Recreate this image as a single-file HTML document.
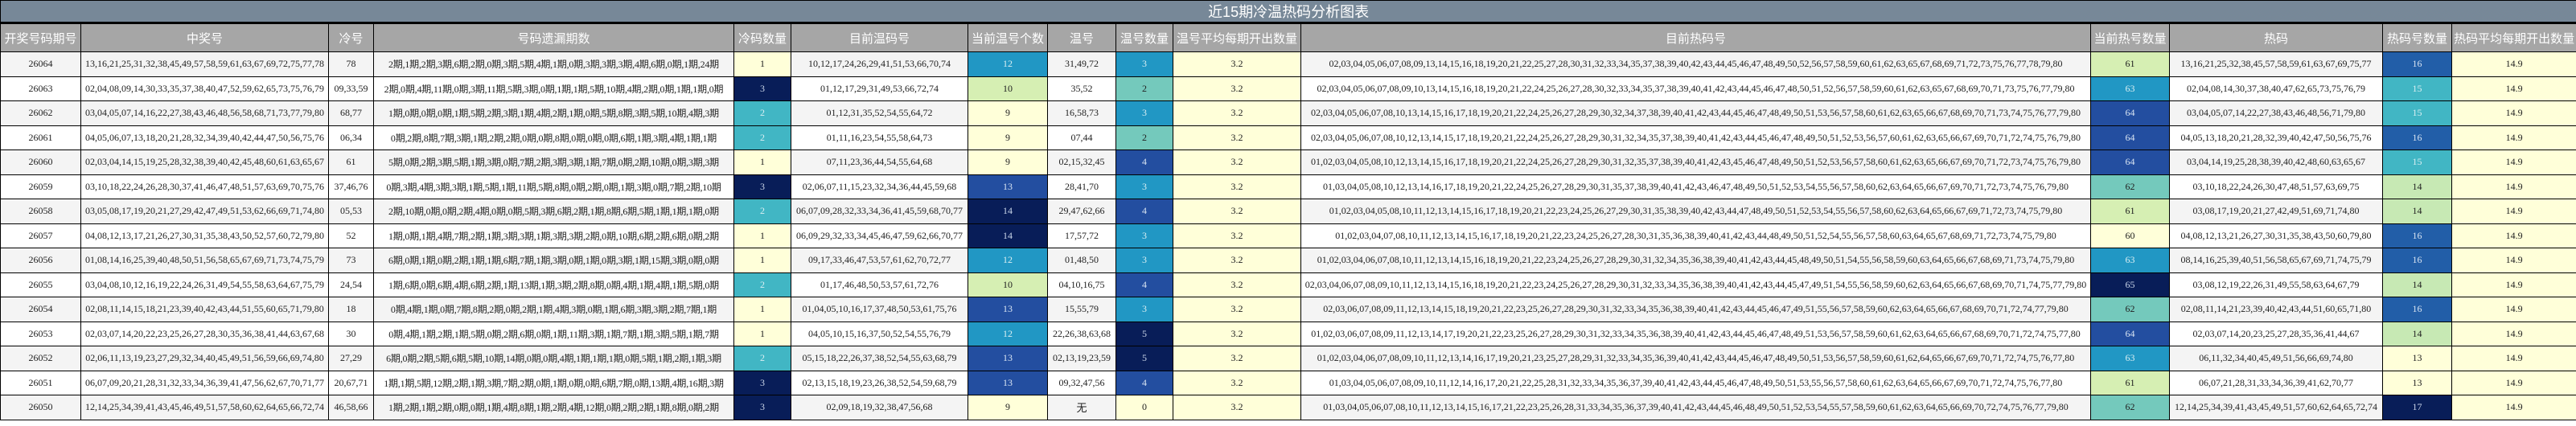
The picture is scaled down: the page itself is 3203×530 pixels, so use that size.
<!DOCTYPE html>
<html><head><meta charset="utf-8">
<style>
html,body{margin:0;padding:0;background:#fff;}
body{width:3203px;height:530px;overflow:hidden;}
table{border-collapse:collapse;table-layout:fixed;width:3203px;}
td{border:1.5px solid #000;text-align:center;white-space:nowrap;overflow:hidden;padding:0;
 font-family:"Liberation Serif","Noto Serif CJK SC",serif;font-size:12px;color:#222;}
tr.t td{height:26px;background:#778898;color:#fff;font-family:"Liberation Sans","Noto Sans CJK SC",sans-serif;font-size:18px;border-bottom:3px solid #000;}
tr.h td{height:34px;background:#a6a6a6;color:#fff;font-family:"Liberation Sans","Noto Sans CJK SC",sans-serif;font-size:15px;}
tr.d td{height:29.5px;}
tr.o td{background:#f4f4f4;}
tr.e td{background:#fff;}
tr.d td.Y{background:#ffffd9;}
tr.d td.G{background:#d6efb3;}
tr.d td.G2{background:#c7e9b4;}
tr.d td.T{background:#74c9bc;}
tr.d td.T2{background:#41b6c4;color:#d8eef2;}
tr.d td.B1{background:#2197c4;color:#d8eef2;}
tr.d td.B2{background:#225ea8;color:#d8e4f2;}
tr.d td.B3{background:#234ea0;color:#d8e4f2;}
tr.d td.D{background:#081d58;color:#c8d4e8;}
td.c4{font-family:"Liberation Serif","Noto Sans CJK SC",serif;letter-spacing:-0.2px;}
</style></head><body>
<table>
<colgroup>
<col style="width:100px"><col style="width:308px"><col style="width:56px"><col style="width:448px"><col style="width:71px"><col style="width:220px"><col style="width:99px"><col style="width:85px"><col style="width:71px"><col style="width:159px"><col style="width:982px"><col style="width:98px"><col style="width:265px"><col style="width:86px"><col style="width:155px">
</colgroup>
<tr class="t"><td colspan="15">近15期冷温热码分析图表</td></tr>
<tr class="h"><td>开奖号码期号</td><td>中奖号</td><td>冷号</td><td>号码遗漏期数</td><td>冷码数量</td><td>目前温码号</td><td>当前温号个数</td><td>温号</td><td>温号数量</td><td>温号平均每期开出数量</td><td>目前热码号</td><td>当前热号数量</td><td>热码</td><td>热码号数量</td><td>热码平均每期开出数量</td></tr>

<tr class="d o"><td>26064</td><td>13,16,21,25,31,32,38,45,49,57,58,59,61,63,67,69,72,75,77,78</td><td>78</td><td class="c4">2期,1期,2期,3期,6期,2期,0期,3期,5期,4期,1期,0期,3期,3期,3期,4期,6期,0期,1期,24期</td><td class="Y">1</td><td>10,12,17,24,26,29,41,51,53,66,70,74</td><td class="B1">12</td><td>31,49,72</td><td class="B1">3</td><td class="Y">3.2</td><td>02,03,04,05,06,07,08,09,13,14,15,16,18,19,20,21,22,25,27,28,30,31,32,33,34,35,37,38,39,40,42,43,44,45,46,47,48,49,50,52,56,57,58,59,60,61,62,63,65,67,68,69,71,72,73,75,76,77,78,79,80</td><td class="G">61</td><td>13,16,21,25,32,38,45,57,58,59,61,63,67,69,75,77</td><td class="B2">16</td><td class="Y">14.9</td></tr>

<tr class="d e"><td>26063</td><td>02,04,08,09,14,30,33,35,37,38,40,47,52,59,62,65,73,75,76,79</td><td>09,33,59</td><td class="c4">2期,0期,4期,11期,0期,3期,11期,5期,3期,0期,1期,1期,5期,10期,4期,2期,0期,1期,1期,0期</td><td class="D">3</td><td>01,12,17,29,31,49,53,66,72,74</td><td class="G">10</td><td>35,52</td><td class="T">2</td><td class="Y">3.2</td><td>02,03,04,05,06,07,08,09,10,13,14,15,16,18,19,20,21,22,24,25,26,27,28,30,32,33,34,35,37,38,39,40,41,42,43,44,45,46,47,48,50,51,52,56,57,58,59,60,61,62,63,65,67,68,69,70,71,73,75,76,77,79,80</td><td class="B1">63</td><td>02,04,08,14,30,37,38,40,47,62,65,73,75,76,79</td><td class="T2">15</td><td class="Y">14.9</td></tr>

<tr class="d o"><td>26062</td><td>03,04,05,07,14,16,22,27,38,43,46,48,56,58,68,71,73,77,79,80</td><td>68,77</td><td class="c4">1期,0期,0期,0期,1期,5期,2期,3期,1期,4期,2期,1期,0期,5期,8期,3期,5期,10期,4期,3期</td><td class="T2">2</td><td>01,12,31,35,52,54,55,64,72</td><td class="Y">9</td><td>16,58,73</td><td class="B1">3</td><td class="Y">3.2</td><td>02,03,04,05,06,07,08,10,13,14,15,16,17,18,19,20,21,22,24,25,26,27,28,29,30,32,34,37,38,39,40,41,42,43,44,45,46,47,48,49,50,51,53,56,57,58,60,61,62,63,65,66,67,68,69,70,71,73,74,75,76,77,79,80</td><td class="B3">64</td><td>03,04,05,07,14,22,27,38,43,46,48,56,71,79,80</td><td class="T2">15</td><td class="Y">14.9</td></tr>

<tr class="d e"><td>26061</td><td>04,05,06,07,13,18,20,21,28,32,34,39,40,42,44,47,50,56,75,76</td><td>06,34</td><td class="c4">0期,2期,8期,7期,3期,1期,2期,2期,0期,0期,8期,0期,0期,0期,6期,1期,3期,4期,1期,1期</td><td class="T2">2</td><td>01,11,16,23,54,55,58,64,73</td><td class="Y">9</td><td>07,44</td><td class="T">2</td><td class="Y">3.2</td><td>02,03,04,05,06,07,08,10,12,13,14,15,17,18,19,20,21,22,24,25,26,27,28,29,30,31,32,34,35,37,38,39,40,41,42,43,44,45,46,47,48,49,50,51,52,53,56,57,60,61,62,63,65,66,67,69,70,71,72,74,75,76,79,80</td><td class="B3">64</td><td>04,05,13,18,20,21,28,32,39,40,42,47,50,56,75,76</td><td class="B2">16</td><td class="Y">14.9</td></tr>

<tr class="d o"><td>26060</td><td>02,03,04,14,15,19,25,28,32,38,39,40,42,45,48,60,61,63,65,67</td><td>61</td><td class="c4">5期,0期,2期,3期,5期,1期,3期,0期,7期,2期,3期,3期,1期,7期,0期,2期,10期,0期,3期,3期</td><td class="Y">1</td><td>07,11,23,36,44,54,55,64,68</td><td class="Y">9</td><td>02,15,32,45</td><td class="B3">4</td><td class="Y">3.2</td><td>01,02,03,04,05,08,10,12,13,14,15,16,17,18,19,20,21,22,24,25,26,27,28,29,30,31,32,35,37,38,39,40,41,42,43,45,46,47,48,49,50,51,52,53,56,57,58,60,61,62,63,65,66,67,69,70,71,72,73,74,75,76,79,80</td><td class="B3">64</td><td>03,04,14,19,25,28,38,39,40,42,48,60,63,65,67</td><td class="T2">15</td><td class="Y">14.9</td></tr>

<tr class="d e"><td>26059</td><td>03,10,18,22,24,26,28,30,37,41,46,47,48,51,57,63,69,70,75,76</td><td>37,46,76</td><td class="c4">0期,3期,4期,3期,3期,1期,5期,1期,11期,5期,8期,0期,2期,0期,1期,3期,0期,7期,2期,10期</td><td class="D">3</td><td>02,06,07,11,15,23,32,34,36,44,45,59,68</td><td class="B3">13</td><td>28,41,70</td><td class="B1">3</td><td class="Y">3.2</td><td>01,03,04,05,08,10,12,13,14,16,17,18,19,20,21,22,24,25,26,27,28,29,30,31,35,37,38,39,40,41,42,43,46,47,48,49,50,51,52,53,54,55,56,57,58,60,62,63,64,65,66,67,69,70,71,72,73,74,75,76,79,80</td><td class="T">62</td><td>03,10,18,22,24,26,30,47,48,51,57,63,69,75</td><td class="G2">14</td><td class="Y">14.9</td></tr>

<tr class="d o"><td>26058</td><td>03,05,08,17,19,20,21,27,29,42,47,49,51,53,62,66,69,71,74,80</td><td>05,53</td><td class="c4">2期,10期,0期,0期,2期,4期,0期,0期,5期,3期,6期,2期,1期,8期,6期,5期,1期,1期,1期,0期</td><td class="T2">2</td><td>06,07,09,28,32,33,34,36,41,45,59,68,70,77</td><td class="D">14</td><td>29,47,62,66</td><td class="B3">4</td><td class="Y">3.2</td><td>01,02,03,04,05,08,10,11,12,13,14,15,16,17,18,19,20,21,22,23,24,25,26,27,29,30,31,35,38,39,40,42,43,44,47,48,49,50,51,52,53,54,55,56,57,58,60,62,63,64,65,66,67,69,71,72,73,74,75,79,80</td><td class="G">61</td><td>03,08,17,19,20,21,27,42,49,51,69,71,74,80</td><td class="G2">14</td><td class="Y">14.9</td></tr>

<tr class="d e"><td>26057</td><td>04,08,12,13,17,21,26,27,30,31,35,38,43,50,52,57,60,72,79,80</td><td>52</td><td class="c4">1期,0期,1期,4期,7期,2期,1期,3期,3期,1期,3期,3期,2期,0期,10期,6期,2期,6期,0期,2期</td><td class="Y">1</td><td>06,09,29,32,33,34,45,46,47,59,62,66,70,77</td><td class="D">14</td><td>17,57,72</td><td class="B1">3</td><td class="Y">3.2</td><td>01,02,03,04,07,08,10,11,12,13,14,15,16,17,18,19,20,21,22,23,24,25,26,27,28,30,31,35,36,38,39,40,41,42,43,44,48,49,50,51,52,54,55,56,57,58,60,63,64,65,67,68,69,71,72,73,74,75,79,80</td><td class="Y">60</td><td>04,08,12,13,21,26,27,30,31,35,38,43,50,60,79,80</td><td class="B2">16</td><td class="Y">14.9</td></tr>

<tr class="d o"><td>26056</td><td>01,08,14,16,25,39,40,48,50,51,56,58,65,67,69,71,73,74,75,79</td><td>73</td><td class="c4">6期,0期,1期,0期,2期,1期,1期,6期,7期,1期,3期,0期,1期,0期,3期,1期,15期,3期,0期,0期</td><td class="Y">1</td><td>09,17,33,46,47,53,57,61,62,70,72,77</td><td class="B1">12</td><td>01,48,50</td><td class="B1">3</td><td class="Y">3.2</td><td>01,02,03,04,06,07,08,10,11,12,13,14,15,16,18,19,20,21,22,23,24,25,26,27,28,29,30,31,32,34,35,36,38,39,40,41,42,43,44,45,48,49,50,51,54,55,56,58,59,60,63,64,65,66,67,68,69,71,73,74,75,79,80</td><td class="B1">63</td><td>08,14,16,25,39,40,51,56,58,65,67,69,71,74,75,79</td><td class="B2">16</td><td class="Y">14.9</td></tr>

<tr class="d e"><td>26055</td><td>03,04,08,10,12,16,19,22,24,26,31,49,54,55,58,63,64,67,75,79</td><td>24,54</td><td class="c4">1期,6期,0期,6期,4期,6期,2期,1期,13期,1期,3期,2期,8期,0期,4期,1期,4期,1期,5期,0期</td><td class="T2">2</td><td>01,17,46,48,50,53,57,61,72,76</td><td class="G">10</td><td>04,10,16,75</td><td class="B3">4</td><td class="Y">3.2</td><td>02,03,04,06,07,08,09,10,11,12,13,14,15,16,18,19,20,21,22,23,24,25,26,27,28,29,30,31,32,33,34,35,36,38,39,40,41,42,43,44,45,47,49,51,54,55,56,58,59,60,62,63,64,65,66,67,68,69,70,71,74,75,77,79,80</td><td class="D">65</td><td>03,08,12,19,22,26,31,49,55,58,63,64,67,79</td><td class="G2">14</td><td class="Y">14.9</td></tr>

<tr class="d o"><td>26054</td><td>02,08,11,14,15,18,21,23,39,40,42,43,44,51,55,60,65,71,79,80</td><td>18</td><td class="c4">0期,4期,1期,0期,7期,8期,2期,0期,2期,1期,4期,3期,0期,1期,6期,3期,3期,2期,7期,1期</td><td class="Y">1</td><td>01,04,05,10,16,17,37,48,50,53,61,75,76</td><td class="B3">13</td><td>15,55,79</td><td class="B1">3</td><td class="Y">3.2</td><td>02,03,06,07,08,09,11,12,13,14,15,18,19,20,21,22,23,25,26,27,28,29,30,31,32,33,34,35,36,38,39,40,41,42,43,44,45,46,47,49,51,55,56,57,58,59,60,62,63,64,65,66,67,68,69,70,71,72,74,77,79,80</td><td class="T">62</td><td>02,08,11,14,21,23,39,40,42,43,44,51,60,65,71,80</td><td class="B2">16</td><td class="Y">14.9</td></tr>

<tr class="d e"><td>26053</td><td>02,03,07,14,20,22,23,25,26,27,28,30,35,36,38,41,44,63,67,68</td><td>30</td><td class="c4">0期,4期,1期,2期,1期,5期,0期,2期,6期,0期,1期,11期,3期,1期,7期,1期,3期,5期,1期,7期</td><td class="Y">1</td><td>04,05,10,15,16,37,50,52,54,55,76,79</td><td class="B1">12</td><td>22,26,38,63,68</td><td class="D">5</td><td class="Y">3.2</td><td>01,02,03,06,07,08,09,11,12,13,14,17,19,20,21,22,23,25,26,27,28,29,30,31,32,33,34,35,36,38,39,40,41,42,43,44,45,46,47,48,49,51,53,56,57,58,59,60,61,62,63,64,65,66,67,68,69,70,71,72,74,75,77,80</td><td class="B3">64</td><td>02,03,07,14,20,23,25,27,28,35,36,41,44,67</td><td class="G2">14</td><td class="Y">14.9</td></tr>

<tr class="d o"><td>26052</td><td>02,06,11,13,19,23,27,29,32,34,40,45,49,51,56,59,66,69,74,80</td><td>27,29</td><td class="c4">6期,0期,2期,5期,6期,5期,10期,14期,0期,0期,4期,1期,1期,1期,0期,5期,1期,2期,1期,3期</td><td class="T2">2</td><td>05,15,18,22,26,37,38,52,54,55,63,68,79</td><td class="B3">13</td><td>02,13,19,23,59</td><td class="D">5</td><td class="Y">3.2</td><td>01,02,03,04,06,07,08,09,10,11,12,13,14,16,17,19,20,21,23,25,27,28,29,31,32,33,34,35,36,39,40,41,42,43,44,45,46,47,48,49,50,51,53,56,57,58,59,60,61,62,64,65,66,67,69,70,71,72,74,75,76,77,80</td><td class="B1">63</td><td>06,11,32,34,40,45,49,51,56,66,69,74,80</td><td class="Y">13</td><td class="Y">14.9</td></tr>

<tr class="d e"><td>26051</td><td>06,07,09,20,21,28,31,32,33,34,36,39,41,47,56,62,67,70,71,77</td><td>20,67,71</td><td class="c4">1期,1期,5期,12期,2期,1期,3期,7期,2期,0期,1期,0期,0期,6期,7期,0期,13期,4期,16期,3期</td><td class="D">3</td><td>02,13,15,18,19,23,26,38,52,54,59,68,79</td><td class="B3">13</td><td>09,32,47,56</td><td class="B3">4</td><td class="Y">3.2</td><td>01,03,04,05,06,07,08,09,10,11,12,14,16,17,20,21,22,25,28,31,32,33,34,35,36,37,39,40,41,42,43,44,45,46,47,48,49,50,51,53,55,56,57,58,60,61,62,63,64,65,66,67,69,70,71,72,74,75,76,77,80</td><td class="G">61</td><td>06,07,21,28,31,33,34,36,39,41,62,70,77</td><td class="Y">13</td><td class="Y">14.9</td></tr>

<tr class="d o"><td>26050</td><td>12,14,25,34,39,41,43,45,46,49,51,57,58,60,62,64,65,66,72,74</td><td>46,58,66</td><td class="c4">1期,2期,1期,2期,0期,0期,1期,4期,8期,1期,2期,4期,12期,0期,2期,2期,1期,8期,0期,2期</td><td class="D">3</td><td>02,09,18,19,32,38,47,56,68</td><td class="Y">9</td><td style="font-family:'Liberation Sans','Noto Sans CJK SC',sans-serif;font-size:13px">无</td><td class="Y">0</td><td class="Y">3.2</td><td>01,03,04,05,06,07,08,10,11,12,13,14,15,16,17,21,22,23,25,26,28,31,33,34,35,36,37,39,40,41,42,43,44,45,46,48,49,50,51,52,53,54,55,57,58,59,60,61,62,63,64,65,66,69,70,72,74,75,76,77,79,80</td><td class="T">62</td><td>12,14,25,34,39,41,43,45,49,51,57,60,62,64,65,72,74</td><td class="D">17</td><td class="Y">14.9</td></tr>
</table>
</body></html>
